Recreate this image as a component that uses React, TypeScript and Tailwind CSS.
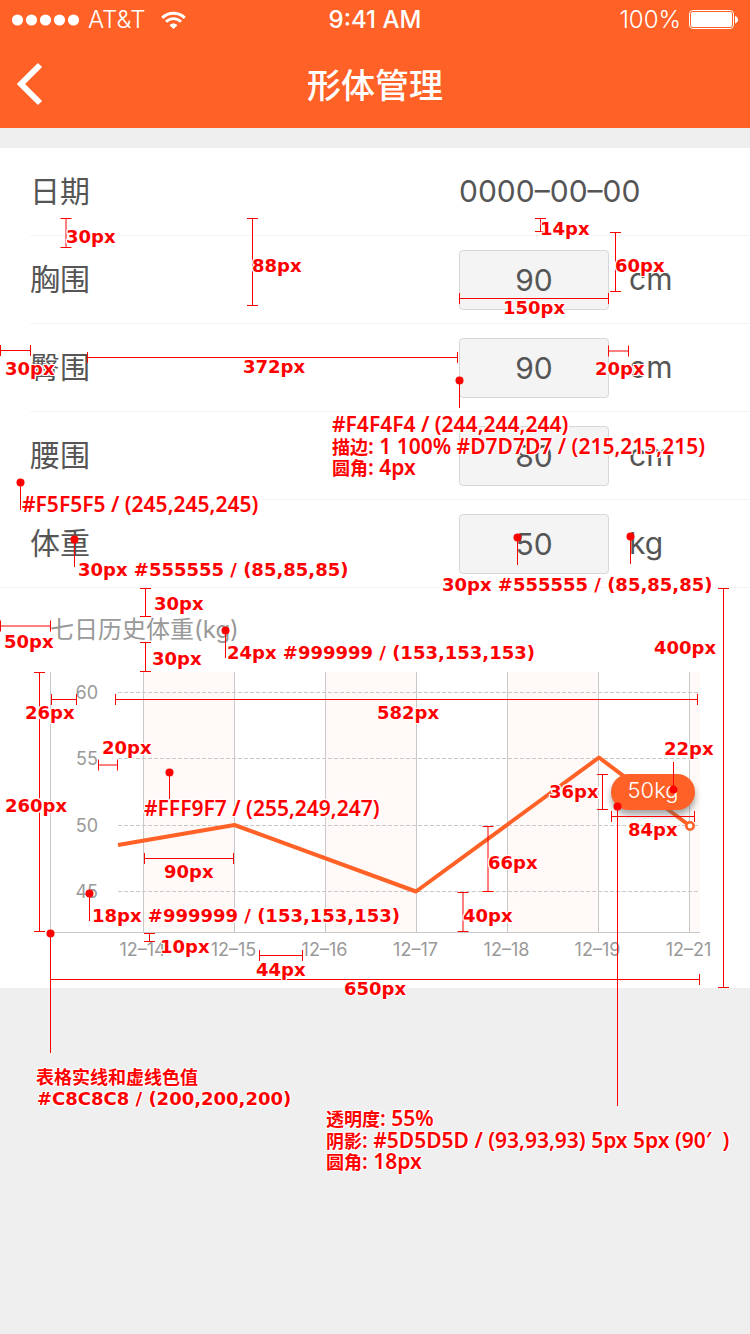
import React from "react";

type Beam = { axis: "v" | "h"; at: number; from: number; to: number };
type Pin = { x: number; y: number; end: number };
type Note = { x: number; y: number; text: string; narrow?: boolean };

const fields = [
  { id: "chest", label: "胸围", value: "90", unit: "cm" },
  { id: "hip", label: "臀围", value: "90", unit: "cm" },
  { id: "waist", label: "腰围", value: "80", unit: "cm" },
  { id: "weight", label: "体重", value: "50", unit: "kg" },
];

const days = ["12–14", "12–15", "12–16", "12–17", "12–18", "12–19", "12–21"];

const ticks = [
  { label: "60", y: 20.5 },
  { label: "55", y: 86.5 },
  { label: "50", y: 153.5 },
  { label: "45", y: 219.5 },
];

const beams: Beam[] = [
  { axis: "v", at: 66, from: 218.5, to: 247.5 },
  { axis: "v", at: 252.5, from: 218.5, to: 305.5 },
  { axis: "v", at: 540.5, from: 218.5, to: 231.5 },
  { axis: "v", at: 615.5, from: 232.5, to: 291.5 },
  { axis: "v", at: 145.5, from: 588.5, to: 616.5 },
  { axis: "v", at: 145.5, from: 642.5, to: 671.5 },
  { axis: "v", at: 723.5, from: 588.5, to: 987.5 },
  { axis: "v", at: 39.5, from: 672.5, to: 931.5 },
  { axis: "v", at: 602.5, from: 774.5, to: 809.5 },
  { axis: "v", at: 488, from: 826.5, to: 891.5 },
  { axis: "v", at: 463, from: 892.5, to: 931.5 },
  { axis: "v", at: 149.5, from: 933.5, to: 941.5 },
  { axis: "h", at: 298.5, from: 459.5, to: 608.5 },
  { axis: "h", at: 350.5, from: 0.5, to: 30.5 },
  { axis: "h", at: 357.5, from: 87.5, to: 457.5 },
  { axis: "h", at: 351, from: 608.5, to: 628.5 },
  { axis: "h", at: 626, from: 0.5, to: 50.5 },
  { axis: "h", at: 699.5, from: 51.5, to: 76.5 },
  { axis: "h", at: 699.5, from: 115.5, to: 697.5 },
  { axis: "h", at: 765, from: 98.5, to: 117.5 },
  { axis: "h", at: 816.5, from: 611.5, to: 694.5 },
  { axis: "h", at: 858.5, from: 144.5, to: 233.5 },
  { axis: "h", at: 955.5, from: 259.5, to: 302.5 },
  { axis: "h", at: 979.5, from: 50.5, to: 699.5 },
];

const pins: Pin[] = [
  { x: 459.5, y: 380.5, end: 408 },
  { x: 20.5, y: 482.5, end: 510 },
  { x: 74.5, y: 539.5, end: 567 },
  { x: 517.5, y: 537.5, end: 565 },
  { x: 630.5, y: 536.5, end: 564 },
  { x: 225.5, y: 630.5, end: 658 },
  { x: 169.5, y: 772.5, end: 799 },
  { x: 89.5, y: 893.5, end: 921 },
  { x: 50.5, y: 933.5, end: 1053 },
  { x: 673.5, y: 789.5, end: 762 },
  { x: 617.5, y: 806.5, end: 1106 },
];

const notes: Note[] = [
  { x: 66, y: 237, text: "30px" },
  { x: 252, y: 266, text: "88px" },
  { x: 540, y: 229, text: "14px" },
  { x: 615, y: 266, text: "60px" },
  { x: 503, y: 308, text: "150px" },
  { x: 5, y: 369, text: "30px" },
  { x: 243, y: 367, text: "372px" },
  { x: 595, y: 369, text: "20px" },
  { x: 332, y: 424, text: "#F4F4F4 / (244,244,244)", narrow: true },
  { x: 332, y: 446, text: "描边: 1 100% #D7D7D7 / (215,215,215)", narrow: true },
  { x: 332, y: 467, text: "圆角: 4px", narrow: true },
  { x: 22, y: 504, text: "#F5F5F5 / (245,245,245)", narrow: true },
  { x: 78, y: 570, text: "30px #555555 / (85,85,85)" },
  { x: 442, y: 585, text: "30px #555555 / (85,85,85)" },
  { x: 154, y: 604, text: "30px" },
  { x: 152, y: 659, text: "30px" },
  { x: 4, y: 642, text: "50px" },
  { x: 227, y: 653, text: "24px #999999 / (153,153,153)" },
  { x: 654, y: 648, text: "400px" },
  { x: 25, y: 713, text: "26px" },
  { x: 377, y: 713, text: "582px" },
  { x: 102, y: 748, text: "20px" },
  { x: 664, y: 749, text: "22px" },
  { x: 5, y: 806, text: "260px" },
  { x: 549, y: 792, text: "36px" },
  { x: 628, y: 830, text: "84px" },
  { x: 144, y: 808, text: "#FFF9F7 / (255,249,247)", narrow: true },
  { x: 164, y: 872, text: "90px" },
  { x: 488, y: 863, text: "66px" },
  { x: 92, y: 916, text: "18px #999999 / (153,153,153)" },
  { x: 463, y: 916, text: "40px" },
  { x: 160, y: 947, text: "10px" },
  { x: 256, y: 970, text: "44px" },
  { x: 344, y: 989, text: "650px" },
  { x: 36, y: 1076, text: "表格实线和虚线色值", narrow: true },
  { x: 37, y: 1099, text: "#C8C8C8 / (200,200,200)" },
  { x: 326, y: 1118, text: "透明度: 55%", narrow: true },
  { x: 326, y: 1140, text: "阴影: #5D5D5D / (93,93,93) 5px 5px (90′  )", narrow: true },
  { x: 326, y: 1161, text: "圆角: 18px", narrow: true },
];

const halo =
  "[text-shadow:1px_0_#fff,-1px_0_#fff,0_1px_#fff,0_-1px_#fff,1px_1px_#fff,-1px_-1px_#fff,1px_-1px_#fff,-1px_1px_#fff]";

function StatusBar() {
  return (
    <div className="grid h-10 grid-cols-3 items-center px-3 text-2xl leading-10">
      <div className="flex items-center">
        <svg width="68" height="12" viewBox="0 0 68 12" fill="#fff" aria-hidden="true">
          {[0, 1, 2, 3, 4].map((i) => (
            <circle key={i} cx={5.5 + i * 14} cy="6" r="5.6" />
          ))}
        </svg>
        <span className="ml-2 font-light">AT&amp;T</span>
        <svg className="ml-4" width="25" height="18" viewBox="0 0 25 18" aria-hidden="true">
          <path d="M1.200 6.800C7.600.6 17.400.6 23.800 6.800" fill="none" stroke="#fff" strokeWidth="3" />
          <path d="M5 10.800c4.200-4.200 10.800-4.200 15 0" fill="none" stroke="#fff" strokeWidth="2.800" />
          <path d="M8.500 14.200c2.300-2.200 5.700-2.200 8 0l-4 3.800z" fill="#fff" />
        </svg>
      </div>
      <span className="text-center font-medium">9:41 AM</span>
      <div className="flex items-center justify-end gap-2">
        <span className="font-light">100%</span>
        <svg width="49" height="20" viewBox="0 0 49 20" aria-hidden="true">
          <rect x=".5" y=".5" width="44" height="18" rx="3.5" fill="none" stroke="#fff" />
          <rect x="2" y="2" width="41" height="15" rx="2" fill="#fff" />
          <path d="M46 6c4 1.2 4 6.200 0 7.400z" fill="#fff" />
        </svg>
      </div>
    </div>
  );
}

function WeightChart() {
  return (
    <section className="bg-white px-[50px] pt-6 pb-[55px]">
      <h2 className="text-2xl leading-9 text-[#999]">七日历史体重(kg)</h2>
      <svg className="mt-6 block w-full overflow-visible" viewBox="0 0 650 261" role="img" aria-label="七日历史体重">
        {[93, 275, 457].map((x) => (
          <rect key={x} x={x} y="0" width="91" height="260" fill="#fff9f7" />
        ))}
        <rect x="639" y="0" width="11" height="260" fill="#fff9f7" />
        {ticks.map((t) => (
          <g key={t.label}>
            <line x1="68" x2="648" y1={t.y} y2={t.y} stroke="#c8c8c8" strokeDasharray="4 2" />
            <text x="48" y={t.y + 6.5} textAnchor="end" fontSize="18" fill="#999">
              {t.label}
            </text>
          </g>
        ))}
        {days.map((d, i) => (
          <g key={d}>
            <line x1={93.5 + i * 91} x2={93.5 + i * 91} y1="0" y2="260" stroke="#c8c8c8" />
            <text x={92.5 + i * 91} y="284" textAnchor="middle" fontSize="18" fill="#999">
              {d}
            </text>
          </g>
        ))}
        <path d="M.5 0V260.500H650" fill="none" stroke="#c8c8c8" />
        <polyline
          points="68,173 184.500,153 366,219.500 549,85.500 640,154"
          fill="none"
          stroke="#ff6126"
          strokeWidth="4"
          strokeLinejoin="round"
        />
        <circle cx="640" cy="154" r="3.700" fill="#fff" stroke="#ff6126" strokeWidth="2.500" />
        <rect
          x="561"
          y="102"
          width="84"
          height="36"
          rx="18"
          fill="#ff6126"
          className="drop-shadow-[0_5px_3px_rgba(93,93,93,0.55)]"
        />
        <text x="603" y="126" textAnchor="middle" fontSize="22" fill="#fff" className="font-light">
          50kg
        </text>
      </svg>
    </section>
  );
}

function Annotations() {
  return (
    <div className="pointer-events-none absolute inset-0 overflow-hidden text-[#f00]">
      <svg className="absolute top-0 left-0" width="750" height="1334" stroke="#f00" aria-hidden="true">
        {beams.map((b, i) => (
          <path
            key={i}
            fill="none"
            d={
              b.axis === "v"
                ? `M${b.at} ${b.from}V${b.to}M${b.at - 5.5} ${b.from}h11M${b.at - 5.5} ${b.to}h11`
                : `M${b.from} ${b.at}H${b.to}M${b.from} ${b.at - 5.5}v11M${b.to} ${b.at - 5.5}v11`
            }
          />
        ))}
        {pins.map((p, i) => (
          <g key={i}>
            <line x1={p.x} x2={p.x} y1={p.y} y2={p.end} />
            <circle cx={p.x} cy={p.y} r="4" fill="#f00" stroke="none" />
          </g>
        ))}
      </svg>
      {notes.map((n, i) => (
        <span
          key={i}
          style={{ left: n.x, top: n.y - 11 }}
          className={`absolute leading-[22px] whitespace-pre ${halo} ${
            n.narrow
              ? "font-['Noto_Sans','Noto_Sans_CJK_SC',sans-serif] text-[21px] font-semibold"
              : "font-['DejaVu_Sans','Noto_Sans_CJK_SC',sans-serif] text-[18px] font-bold"
          }`}
        >
          {n.text.split(/([\u4e00-\u9fff]+)/).map((part, k) =>
            /[\u4e00-\u9fff]/.test(part) ? (
              <span key={k} className="text-[18px] font-bold">
                {part}
              </span>
            ) : (
              part
            ),
          )}
        </span>
      ))}
    </div>
  );
}

export default function App() {
  return (
    <div className="relative min-h-screen bg-[#efefef] font-['Inter','Noto_Sans_CJK_SC',sans-serif] text-[#555]">
      <header className="bg-[#ff6126] text-white">
        <StatusBar />
        <div className="grid h-22 grid-cols-[1fr_auto_1fr] items-center px-4">
          <button type="button" aria-label="返回" className="justify-self-start">
            <svg width="28" height="44" viewBox="0 0 28 44" fill="none" stroke="#fff" strokeWidth="6" aria-hidden="true">
              <path d="M24 3L5 22l19 19" />
            </svg>
          </button>
          <h1 className="pt-1 text-[34px] leading-[44px] font-medium">形体管理</h1>
        </div>
      </header>
      <main className="pt-5">
        <form className="border-b border-[#f5f5f5] bg-white pl-[30px] text-[30px]">
          <div className="flex h-22 items-center border-b border-[#f5f5f5]">
            <span className="flex-1">日期</span>
            <time className="w-[291px]">0000–00–00</time>
          </div>
          {fields.map((f, i) => (
            <div
              key={f.id}
              className={
                i < fields.length - 1
                  ? "flex h-22 items-center border-b border-[#f5f5f5]"
                  : "flex h-[87px] items-center"
              }
            >
              <label htmlFor={f.id} className="flex-1">
                {f.label}
              </label>
              <div className="flex w-[291px] items-center gap-5">
                <input
                  id={f.id}
                  defaultValue={f.value}
                  inputMode="numeric"
                  className="h-15 w-[150px] rounded border border-[#d7d7d7] bg-[#f4f4f4] text-center"
                />
                <span>{f.unit}</span>
              </div>
            </div>
          ))}
        </form>
        <WeightChart />
      </main>
      <Annotations />
    </div>
  );
}
